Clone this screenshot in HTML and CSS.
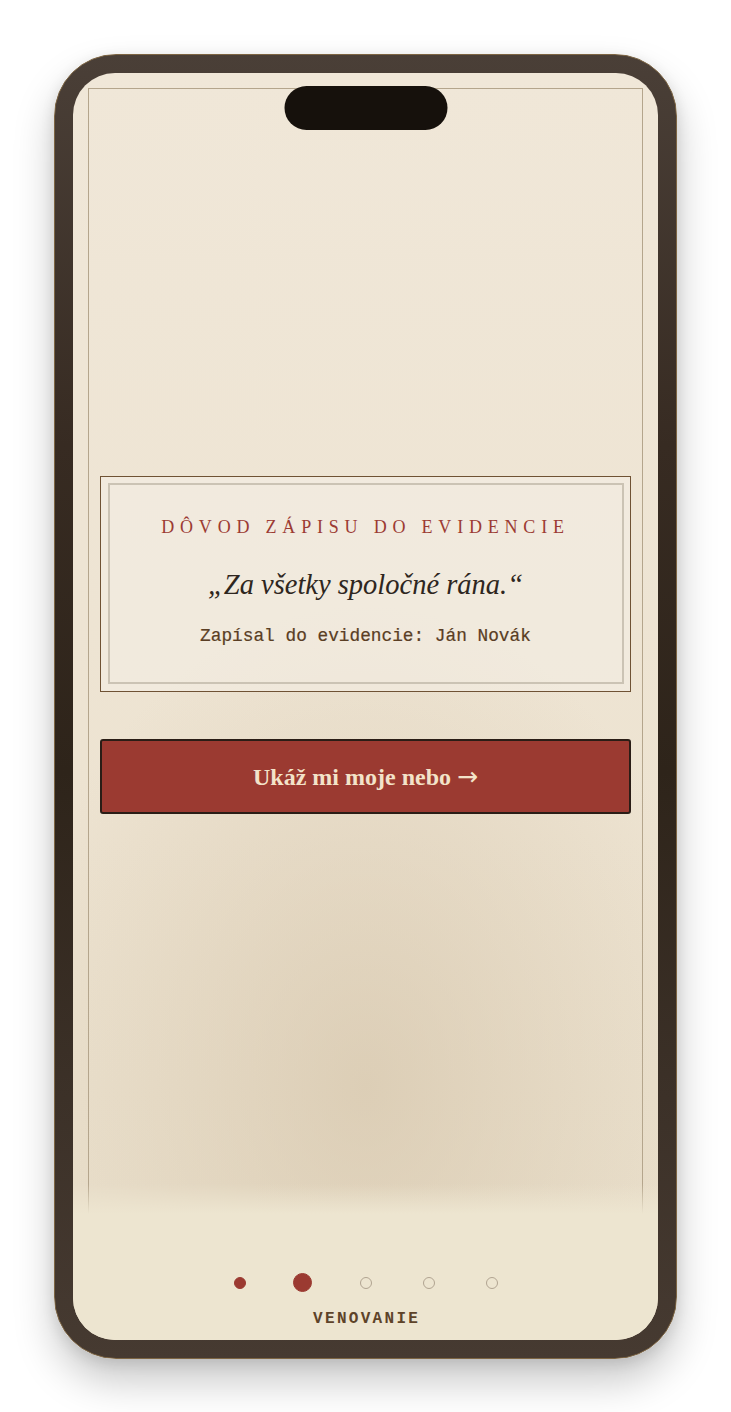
FILE: index.html
```html
<!DOCTYPE html>
<html lang="sk">
<head>
<meta charset="utf-8">
<title>Venovanie</title>
<link rel="stylesheet" href="styles.css">
</head>
<body>
<div class="phone">
  <div class="screen">
    <div class="notch"></div>
    <main class="frame">
      <section class="card">
        <div class="card-inner">
          <h2 class="card-title">DÔVOD ZÁPISU DO EVIDENCIE</h2>
          <p class="quote">„Za všetky spoločné rána.“</p>
          <p class="signed">Zapísal do evidencie: Ján Novák</p>
        </div>
      </section>
      <button class="cta" type="button">Ukáž mi moje nebo <span class="arrow">→</span></button>
    </main>
    <nav class="nav">
      <div class="dots">
        <span class="dot done"></span>
        <span class="dot active"></span>
        <span class="dot"></span>
        <span class="dot"></span>
        <span class="dot"></span>
      </div>
      <div class="nav-label">VENOVANIE</div>
    </nav>
  </div>
</div>
</body>
</html>
```
FILE: styles.css
```css
* { box-sizing: border-box; }
html, body { margin: 0; padding: 0; }
body {
  background: #ffffff;
  min-height: 100vh;
  display: flex;
  align-items: center;
  justify-content: center;
  font-family: "Liberation Serif", "DejaVu Serif", serif;
}
.phone {
  width: 623px;
  height: 1305px;
  border-radius: 62px;
  border: 1.5px solid #7d6543;
  background: linear-gradient(180deg, #4a3f37 0%, #372b22 30%, #2e241a 55%, #3c3128 80%, #463a31 100%);
  padding: 18px;
  box-shadow: 0 22px 40px rgba(0,0,0,0.22), 0 4px 14px rgba(0,0,0,0.10);
}
.screen {
  position: relative;
  width: 100%;
  height: 100%;
  border-radius: 42px;
  overflow: hidden;
  display: flex;
  flex-direction: column;
  background:
    radial-gradient(ellipse 62% 38% at 50% 80%, rgba(214,198,172,0.7) 0%, rgba(214,198,172,0) 100%),
    linear-gradient(180deg, #f0e7d8 0%, #ede3d1 60%, #e9dfcb 100%);
}
.notch {
  position: absolute;
  top: 13px;
  left: 50%;
  transform: translateX(-50%);
  width: 163px;
  height: 44px;
  border-radius: 22px;
  background: #16110c;
  z-index: 3;
}
.frame {
  margin: 15px 15px 94px;
  flex: 1;
  border: 1px solid #b4a58c;
  display: flex;
  flex-direction: column;
  justify-content: center;
  padding: 0 11px 44px;
}
.card {
  border: 1.5px solid #6f5234;
  padding: 6.5px;
  background: rgba(244,239,229,0.55);
}
.card-inner {
  border: 2px solid #cbc3b4;
  padding: 30px 10px 34px;
  text-align: center;
}
.card-title {
  margin: 0;
  font-weight: normal;
  font-size: 18px;
  line-height: 24px;
  letter-spacing: 5.8px;
  color: #9c3b33;
}
.quote {
  margin: 26px 0 0;
  font-style: italic;
  font-size: 28.5px;
  line-height: 40px;
  color: #2e2620;
}
.signed {
  margin: 19px 0 0;
  font-family: "Liberation Mono", "DejaVu Sans Mono", monospace;
  font-size: 17.8px;
  line-height: 24px;
  color: #5a3e24;
  -webkit-text-stroke: 0.2px #5a3e24;
}
.cta {
  margin-top: 47px;
  height: 75px;
  width: 100%;
  border: 2px solid #2a1d16;
  border-radius: 3px;
  background: #9b3a31;
  color: #f3e3c9;
  font-family: "Liberation Serif", "DejaVu Serif", serif;
  font-weight: bold;
  font-size: 24px;
}
.arrow {
  font-family: "DejaVu Sans", sans-serif;
  font-weight: normal;
  font-size: 25px;
}
.nav {
  position: absolute;
  left: 0;
  right: 0;
  bottom: 0;
  height: 156px;
  background: linear-gradient(180deg, rgba(237,229,208,0) 0%, #ede5d0 30px, #ede5d0 100%);
  display: flex;
  flex-direction: column;
  justify-content: flex-end;
  align-items: center;
  padding-bottom: 11px;
  z-index: 2;
}
.dots {
  display: grid;
  grid-template-columns: repeat(5, 63px);
  justify-items: center;
  align-items: center;
  height: 20px;
}
.dot {
  width: 12px;
  height: 12px;
  border-radius: 50%;
  border: 1.5px solid #b1a491;
}
.dot.done {
  background: #9b3a31;
  border-color: #9b3a31;
}
.dot.active {
  width: 19px;
  height: 19px;
  background: #9b3a31;
  border-color: #9b3a31;
}
.nav-label {
  margin-top: 16px;
  font-family: "Liberation Mono", "DejaVu Sans Mono", monospace;
  font-size: 16px;
  line-height: 20px;
  letter-spacing: 2.3px;
  padding-left: 2.3px;
  color: #5e4329;
  font-weight: bold;
}
```
